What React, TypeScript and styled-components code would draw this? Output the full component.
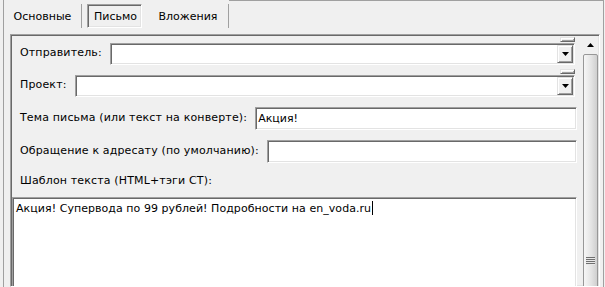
import * as React from "react";
import styled, { createGlobalStyle, css } from "styled-components";

const GlobalStyle = createGlobalStyle`
  body {
    margin: 0;
    background: #f0f0f0;
    font-family: "DejaVu Sans", Tahoma, sans-serif;
    font-size: 11px;
    color: #000;
  }
`;

const sunken = css`
  box-sizing: border-box;
  border: 1px solid;
  border-color: #a0a0a0 #ffffff #ffffff #a0a0a0;
  box-shadow: inset 1px 1px 0 #696969, inset -1px -1px 0 #e3e3e3;
`;

const raised = css`
  box-sizing: border-box;
  border: 1px solid;
  border-color: #e3e3e3 #696969 #696969 #e3e3e3;
  box-shadow: inset 1px 1px 0 #ffffff, inset -1px -1px 0 #a0a0a0;
  background: #f0f0f0;
`;

const Window = styled.div`
  width: 605px;
  height: 287px;
  overflow: hidden;
  box-sizing: border-box;
  padding: 0 1px 0 3px;
`;

const Frame = styled.div`
  height: 100%;
  display: flex;
  flex-direction: column;
  border-left: 1px solid #a0a0a0;
  border-right: 1px solid #a0a0a0;
`;

const TabStrip = styled.div`
  display: flex;
  height: 34px;
  flex-shrink: 0;
`;

const Tab = styled.div<{ $w: number; $sep?: boolean }>`
  width: ${(p) => p.$w}px;
  height: 24px;
  margin-top: 4px;
  box-sizing: border-box;
  display: flex;
  align-items: center;
  justify-content: center;
  border-right: ${(p) => (p.$sep ? "1px solid #a0a0a0" : "none")};
`;

const ActiveTab = styled.div`
  ${sunken}
  width: 55px;
  height: 24px;
  margin: 4px 6px 0 5px;
  display: flex;
  align-items: center;
  justify-content: center;
  padding-left: 2px;
`;

const TabFill = styled.div`
  flex: 1;
  border-top: 1px solid #a0a0a0;
`;

const Panel = styled.div`
  ${sunken}
  flex: 1;
  margin: 0 3px 0 6px;
  display: flex;
  min-height: 0;
  overflow: hidden;
`;

const Content = styled.div`
  flex: 1;
  display: flex;
  flex-direction: column;
  padding: 1px 4px 0 1px;
  min-width: 0;
`;

const Row = styled.div<{ $top: number }>`
  display: flex;
  align-items: flex-end;
  gap: 8px;
  padding-left: 8px;
  margin-top: ${(p) => p.$top}px;
`;

const Label = styled.span`
  line-height: 20px;
  margin-bottom: 2px;
  white-space: nowrap;
  letter-spacing: 0.15px;
`;

const ComboCol = styled.div`
  flex: 1;
  display: flex;
  flex-direction: column;
  margin-right: 2px;
`;

const Nub = styled.div`
  ${raised}
  align-self: flex-end;
  width: 15px;
  height: 5px;
  margin-bottom: 1px;
`;

const Combo = styled.div`
  ${sunken}
  height: 22px;
  padding: 1px;
  background: #fff;
  display: flex;
  justify-content: flex-end;
`;

const DropButton = styled.div`
  ${raised}
  width: 16px;
  height: 18px;
  display: flex;
  align-items: center;
  justify-content: center;
`;

const TextBox = styled.div`
  ${sunken}
  flex: 1;
  height: 23px;
  background: #fff;
  padding: 0 2px;
  line-height: 21px;
  white-space: nowrap;
`;

const TemplateLabel = styled.div`
  padding-left: 8px;
  margin: 11px 0 9px;
  line-height: 14px;
  letter-spacing: 0.15px;
`;

const Memo = styled.div`
  ${sunken}
  flex: 1;
  min-height: 140px;
  background: #fff;
  padding: 3px 3px;
  line-height: 14px;
  white-space: nowrap;
  letter-spacing: 0.05px;
`;

const Caret = styled.span`
  display: inline-block;
  width: 1px;
  height: 14px;
  margin-left: 1px;
  background: #000;
  vertical-align: -3px;
`;

const ScrollBar = styled.div`
  width: 18px;
  flex-shrink: 0;
  display: flex;
  flex-direction: column;
  align-items: center;
  overflow: hidden;
`;

const ScrollArrow = styled.div`
  height: 19px;
  flex-shrink: 0;
  display: flex;
  align-items: center;
  justify-content: center;
`;

const Thumb = styled.div`
  width: 15px;
  height: 414px;
  flex-shrink: 0;
  box-sizing: border-box;
  border: 1px solid #979797;
  border-radius: 2px;
  background: linear-gradient(to right, #f6f6f6, #e4e4e4 55%, #cfcfcf);
  display: flex;
  align-items: center;
  justify-content: center;
`;

const Grip = styled.div`
  width: 9px;
  height: 8px;
  background: repeating-linear-gradient(
    to bottom,
    #6f6f6f 0 1px,
    #e8e8e8 1px 2px
  );
`;

const Triangle = ({ up }: { up?: boolean }) => (
  <svg width="7" height="4" viewBox="0 0 7 4">
    <polygon points={up ? "3.5,0 7,4 0,4" : "0,0 7,0 3.5,4"} fill="#000" />
  </svg>
);

const ComboField = ({ label, top }: { label: string; top: number }) => (
  <Row $top={top}>
    <Label>{label}</Label>
    <ComboCol>
      <Nub />
      <Combo>
        <DropButton>
          <Triangle />
        </DropButton>
      </Combo>
    </ComboCol>
  </Row>
);

const TextField = ({
  label,
  value,
  top,
}: {
  label: string;
  value?: string;
  top: number;
}) => (
  <Row $top={top}>
    <Label>{label}</Label>
    <TextBox>{value}</TextBox>
  </Row>
);

const App: React.FC = () => {
  return (
    <Window>
      <GlobalStyle />
      <Frame>
        <TabStrip>
          <Tab $w={78} $sep>
            Основные
          </Tab>
          <ActiveTab>Письмо</ActiveTab>
          <Tab $w={81} $sep>
            Вложения
          </Tab>
          <TabFill />
        </TabStrip>
        <Panel>
          <Content>
            <ComboField label="Отправитель:" top={1} />
            <ComboField label="Проект:" top={4} />
            <TextField
              label="Тема письма (или текст на конверте):"
              value="Акция!"
              top={10}
            />
            <TextField label="Обращение к адресату (по умолчанию):" top={10} />
            <TemplateLabel>Шаблон текста (HTML+тэги CT):</TemplateLabel>
            <Memo>
              Акция! Супервода по 99 рублей! Подробности на en_voda.ru
              <Caret />
            </Memo>
          </Content>
          <ScrollBar>
            <ScrollArrow>
              <Triangle up />
            </ScrollArrow>
            <Thumb>
              <Grip />
            </Thumb>
          </ScrollBar>
        </Panel>
      </Frame>
    </Window>
  );
};

export default App;
